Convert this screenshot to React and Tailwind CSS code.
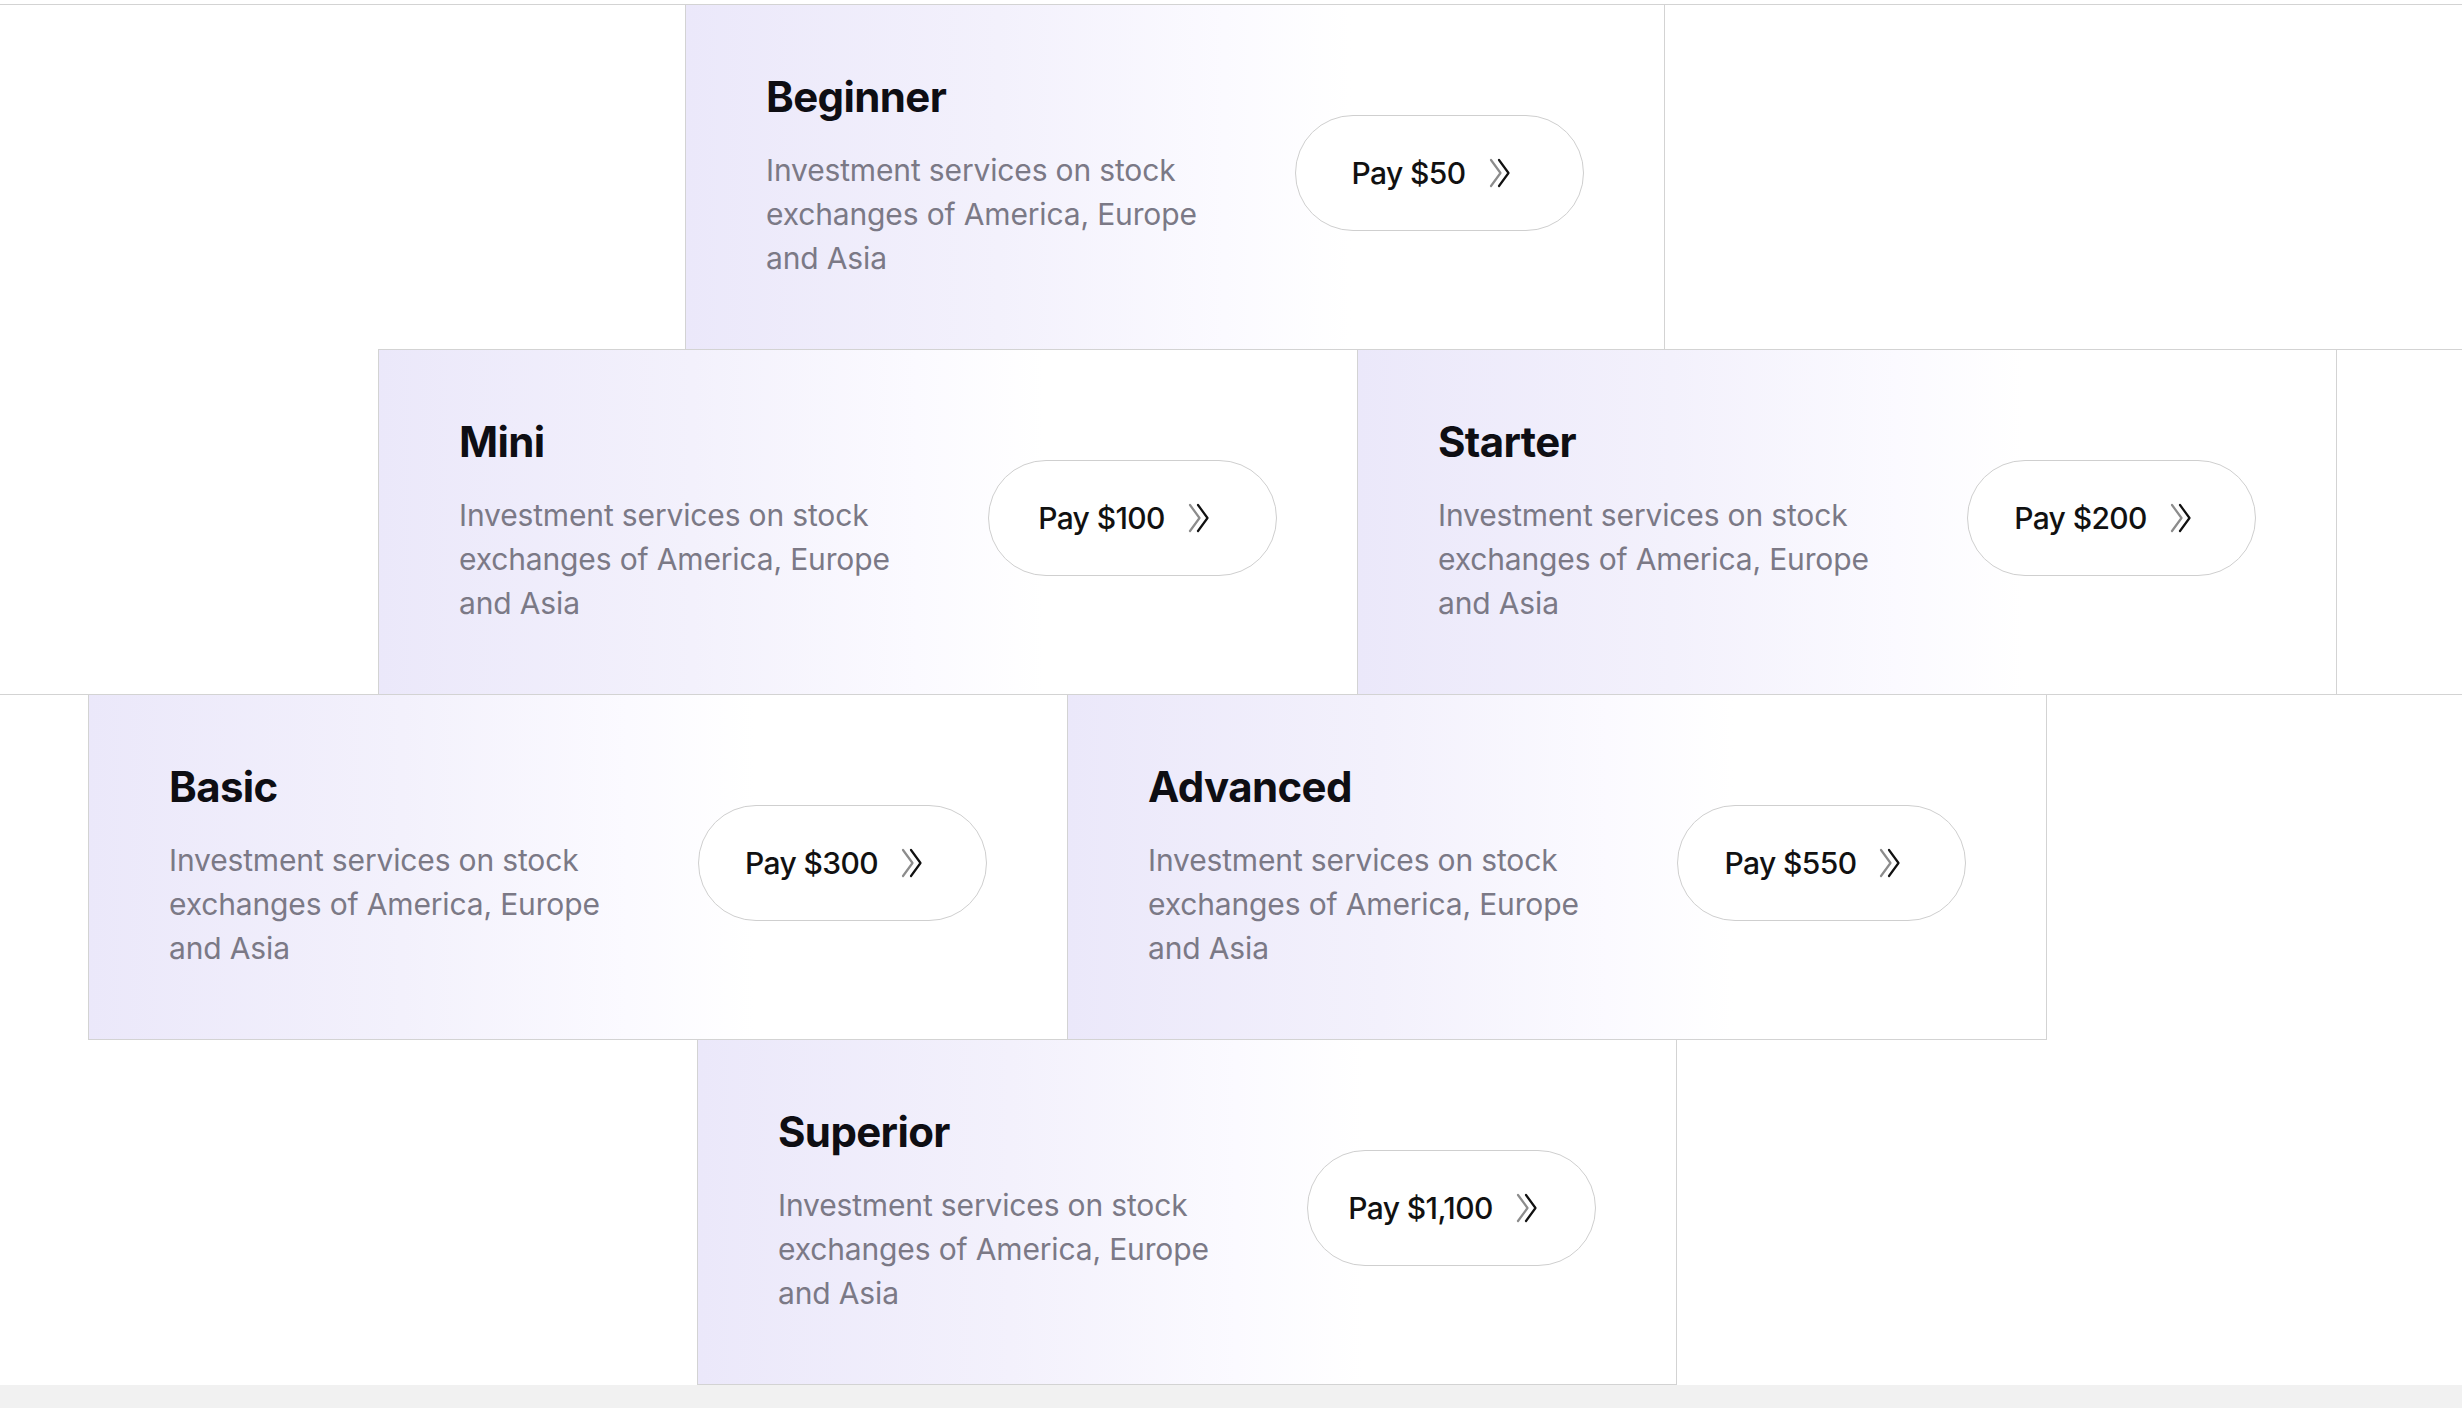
import React from 'react'

const plans = {
    beginner: { name: 'Beginner', price: '$50' },
    mini: { name: 'Mini', price: '$100' },
    starter: { name: 'Starter', price: '$200' },
    basic: { name: 'Basic', price: '$300' },
    advanced: { name: 'Advanced', price: '$550' },
    superior: { name: 'Superior', price: '$1,100' },
}

// each row of the wall is shifted, like a running marquee
const rows = [
    { lead: 'w-[685px] border-t', cards: [plans.beginner], tail: true },
    { lead: 'w-[378px]', cards: [plans.mini, plans.starter], tail: true },
    { lead: 'w-[88px] border-t', cards: [plans.basic, plans.advanced], tail: false },
    { lead: 'w-[697px]', cards: [plans.superior], tail: false },
]

const Chevrons = () => (
    <svg width="24" height="32" viewBox="0 0 24 32" fill="none" strokeWidth="2.2" strokeLinecap="round" strokeLinejoin="round">
        <path d="M3 3 L12.5 16 L3 29" stroke="#8c8c8c" />
        <path d="M11 3 L20.5 16 L11 29" stroke="#111111" />
    </svg>
)

const PlanCard = ({ plan, first }) => {
    return (
        <div className={`shrink-0 w-[980px] h-full border border-[#d3d3d3] bg-[linear-gradient(90deg,#ebe8fa_0%,#f3f1fc_32%,#fbfaff_55%,#ffffff_68%)] flex items-center justify-between px-[80px] ${first ? '' : '-ml-px'}`}>
            <div className="mb-[3px]">
                <h3 className="text-[42px] leading-[52px] font-bold tracking-[-0.015em] text-[#0e0e13]">
                    {plan.name}
                </h3>
                <p className="mt-[25px] text-[30px] leading-[44px] tracking-[-0.005em] text-[#7b7986]">
                    Investment services on stock<br />
                    exchanges of America, Europe<br />
                    and Asia
                </p>
            </div>
            <button className="mb-[8px] w-[289px] h-[116px] rounded-full border border-[#cfcfcf] bg-white flex items-center justify-center gap-[22px] pr-[16px]">
                <span className="text-[30px] font-medium tracking-[-0.02em] text-[#111111]">Pay {plan.price}</span>
                <Chevrons />
            </button>
        </div>
    )
}

export default function App() {
    return (
        <div className="w-full h-screen flex flex-col bg-white overflow-hidden" style={{ fontFamily: 'Inter, "Noto Sans", sans-serif' }}>
            <div className="h-[1385px] shrink-0 overflow-hidden pt-[4px]">
                {rows.map((row, i) => (
                    <div key={i} className={`flex h-[346px] ${i === 0 ? '' : '-mt-px'}`}>
                        <div className={`shrink-0 h-full border-[#d3d3d3] ${row.lead}`} />
                        {row.cards.map((plan, j) => (
                            <PlanCard key={plan.name} plan={plan} first={j === 0} />
                        ))}
                        {row.tail && <div className="flex-1 min-w-0 h-full border-y border-[#d3d3d3]" />}
                    </div>
                ))}
            </div>
            <div className="flex-1 bg-[#f1f1f1]" />
        </div>
    )
}
